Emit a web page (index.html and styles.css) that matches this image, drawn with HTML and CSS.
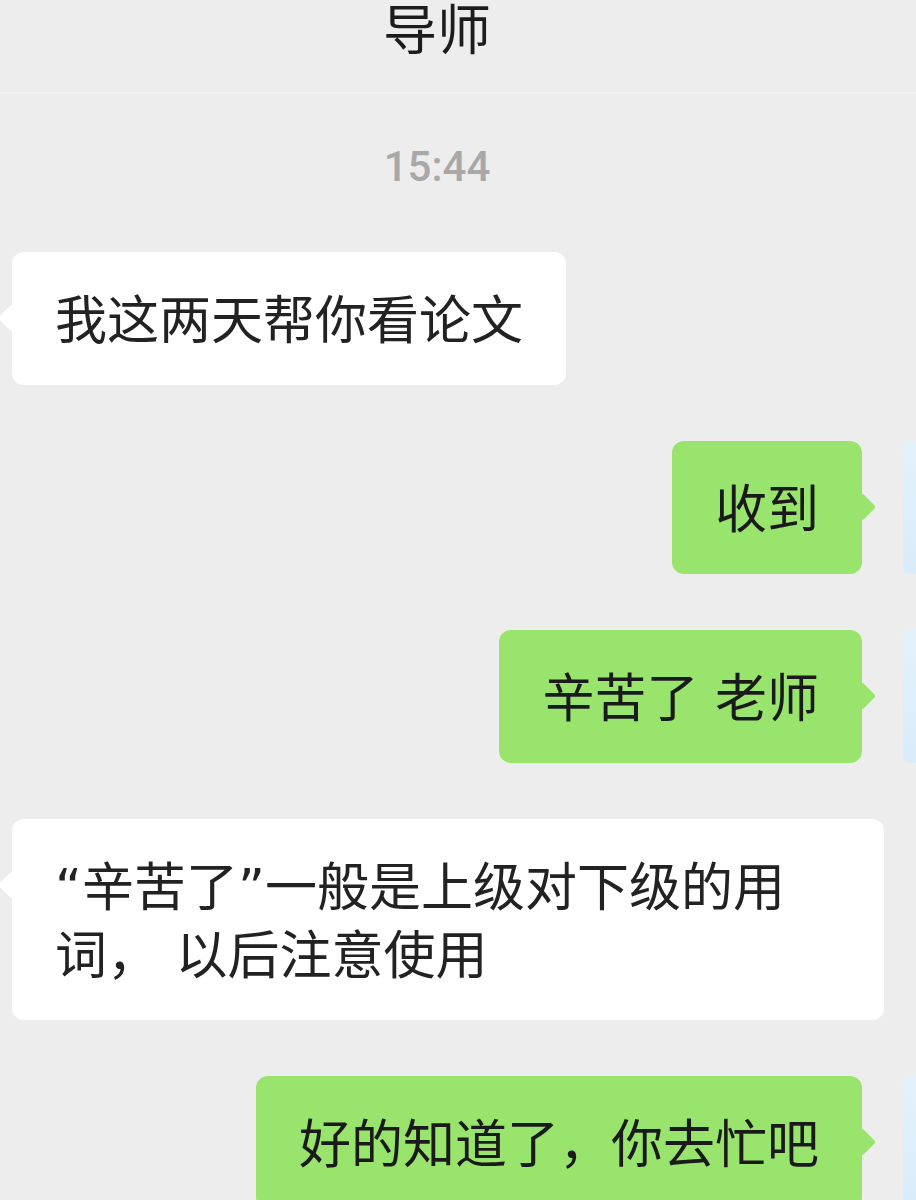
FILE: index.html
```html
<!DOCTYPE html>
<html>
<head>
<meta charset="UTF-8">
<title>导师</title>
<link rel="stylesheet" href="styles.css">
</head>
<body>
	<div class="chat">
		<div class="header">导师</div>
		<div class="time">15:44</div>

		<div class="messages">
			<div class="row left">
				<div class="bubble">我这两天帮你看论文</div>
			</div>
			<div class="row right">
				<div class="bubble">收到</div>
				<div class="avatar"></div>
			</div>
			<div class="row right">
				<div class="bubble">辛苦了 老师</div>
				<div class="avatar"></div>
			</div>
			<div class="row left">
				<div class="bubble wide">“辛苦了”一般是上级对下级的用<br>词， 以后注意使用</div>
			</div>
			<div class="row right">
				<div class="bubble">好的知道了，你去忙吧</div>
				<div class="avatar"></div>
			</div>
		</div>
	</div>
</body>
</html>
```

FILE: styles.css
```css
body {
	margin: 0;
	background: #ededed;
	font-family: "DejaVu Sans", "Noto Sans CJK SC", sans-serif;
}

.chat {
	width: 916px;
	height: 1200px;
	overflow: hidden;
}

/* top bar */
.header {
	height: 92px;
	border-bottom: 2px solid #f3f3f3;
	padding-right: 42px;
	text-align: center;
	font-family: "Noto Sans CJK SC", sans-serif;
	font-size: 54px;
	line-height: 54px;
	color: #1c1c1c;
}

.time {
	margin-top: 52px;
	padding-right: 42px;
	text-align: center;
	font-family: Roboto, sans-serif;
	font-weight: 500;
	font-size: 42px;
	line-height: 42px;
	color: #a8a8a8;
}

/* messages */
.messages {
	display: flex;
	flex-direction: column;
	gap: 56px;
	margin-top: 64px;
}

.row {
	display: flex;
	align-items: flex-start;
}

.row.left {
	padding-left: 12px;
}

.row.right {
	justify-content: flex-end;
}

.bubble {
	position: relative;
	padding: 35px 43px 30px;
	border-radius: 12px;
	font-size: 52px;
	line-height: 68px;
	color: #222;
	white-space: nowrap;
}

.bubble::before {
	content: "";
	position: absolute;
	top: 56px;
	width: 20px;
	height: 20px;
	border-radius: 3px;
	transform: rotate(45deg);
}

.left .bubble,
.left .bubble::before {
	background: #fff;
}

.left .bubble::before {
	left: -10px;
}

.right .bubble,
.right .bubble::before {
	background: #98e46c;
}

.right .bubble {
	color: #1a1a1a;
}

.right .bubble::before {
	right: -10px;
}

.bubble.wide {
	width: 872px;
	box-sizing: border-box;
}

.avatar {
	width: 13px;
	height: 133px;
	margin-left: 41px;
	border-radius: 6px 0 0 6px;
	background: linear-gradient(#e3f1fb, #d8ecf9);
}
```
